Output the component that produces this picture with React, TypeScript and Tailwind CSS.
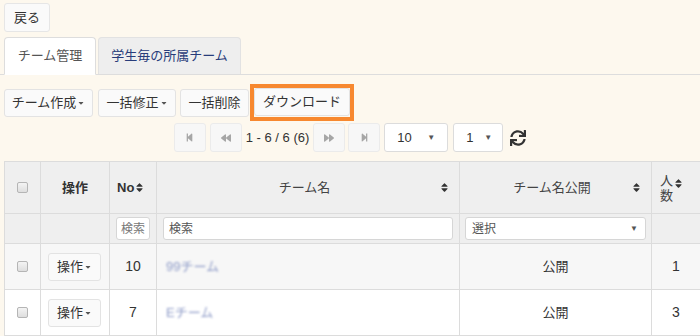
import {
  FaStepBackward,
  FaBackward,
  FaForward,
  FaStepForward,
  FaSort,
  FaSync,
  FaCaretDown,
} from "react-icons/fa";

const font = {
  fontFamily: '"Liberation Sans", "Noto Sans CJK JP", sans-serif',
};

const btn =
  "h-[28px] px-[4px] flex items-center justify-center whitespace-nowrap text-[13px] text-[#333] bg-[#fafafa] border border-[#e3e3e3] rounded-[3px]";

function Caret() {
  return <FaCaretDown className="text-[#555] w-[8px] h-[8px] ml-[1px] shrink-0" />;
}

function PageBtn({ children }: { children: React.ReactNode }) {
  return (
    <div className="w-[32px] h-[29px] flex items-center justify-center bg-[#f7f7f7] border border-[#ebebeb] rounded-[3px] text-[#a6a6a6]">
      {children}
    </div>
  );
}

function Check() {
  return (
    <div className="w-[11px] h-[11px] mx-auto border border-[#b5b5b5] rounded-[2px] bg-gradient-to-b from-[#f4f4f4] to-[#dedede]" />
  );
}

const rows = [
  { no: "10", name: "99チーム", pub: "公開", count: "1" },
  { no: "7", name: "Eチーム", pub: "公開", count: "3" },
];

export default function App() {
  return (
    <div
      className="w-[700px] h-[336px] overflow-hidden bg-[#fdf8ee] pl-[4px] text-[#333]"
      style={font}
    >
      <div className="pt-[3px]">
        <button className="h-[29px] px-[9px] text-[13px] bg-[#fafafa] border border-[#e6e6e6] rounded-[3px] text-[#333]">
          戻る
        </button>
      </div>

      {/* tabs */}
      <div className="mt-[5px] flex items-end border-b border-[#dddddd] h-[38px] -ml-[4px] pl-[4px]">
        <div className="h-[38px] w-[92px] flex items-center justify-center bg-white border border-[#dddddd] border-b-white rounded-t-[4px] text-[13px] text-[#555] -mb-px">
          チーム管理
        </div>
        <div className="ml-[2px] h-[37px] w-[143px] flex items-center justify-center bg-[#eeeeee] border border-[#e2e2e2] border-b-0 rounded-t-[4px] text-[13px] text-[#283c7a]">
          学生毎の所属チーム
        </div>
      </div>

      {/* toolbar */}
      <div className="mt-[9px] flex items-center">
        <button className={btn + " w-[89px]"}>
          チーム作成
          <Caret />
        </button>
        <button className={btn + " ml-[5px] w-[78px]"}>
          一括修正
          <Caret />
        </button>
        <button className={btn + " ml-[4px] w-[69px]"}>一括削除</button>
        <div className="ml-[1px] border-[4px] border-[#f7882f] pb-[1px]">
          <button className={btn + " w-[96px]"}>ダウンロード</button>
        </div>
      </div>

      {/* pagination */}
      <div className="mt-[2px] flex items-center justify-center pr-[4px] h-[29px]">
        <PageBtn>
          <FaStepBackward className="w-[9px] h-[9px]" />
        </PageBtn>
        <div className="ml-[4px]">
          <PageBtn>
            <FaBackward className="w-[10px] h-[10px]" />
          </PageBtn>
        </div>
        <span className="mx-[4px] text-[13px] text-[#333]">1 - 6 / 6 (6)</span>
        <PageBtn>
          <FaForward className="w-[10px] h-[10px]" />
        </PageBtn>
        <div className="ml-[3px]">
          <PageBtn>
            <FaStepForward className="w-[9px] h-[9px]" />
          </PageBtn>
        </div>
        <div className="ml-[4px] w-[64px] h-[29px] flex items-center justify-between px-[12px] bg-white border border-[#dcdcdc] rounded-[3px] text-[13px]">
          <span>10</span>
          <span className="text-[8px] text-[#555]">▼</span>
        </div>
        <div className="ml-[5px] w-[50px] h-[29px] flex items-center justify-between pl-[12px] pr-[10px] bg-white border border-[#dcdcdc] rounded-[3px] text-[13px]">
          <span>1</span>
          <span className="text-[8px] text-[#555]">▼</span>
        </div>
        <FaSync className="ml-[7px] w-[16px] h-[16px] text-[#333]" />
      </div>

      {/* table */}
      <table className="mt-[9px] border-collapse table-fixed w-[696px] text-[13px]">
        <colgroup>
          <col className="w-[36px]" />
          <col className="w-[69px]" />
          <col className="w-[47px]" />
          <col className="w-[303px]" />
          <col className="w-[192px]" />
          <col className="w-[49px]" />
        </colgroup>
        <thead>
          <tr className="h-[52px] bg-[#efefef]">
            <th className="border border-[#dcdcdc] font-normal">
              <Check />
            </th>
            <th className="border border-[#dcdcdc] font-bold text-[#333]">
              操作
            </th>
            <th className="border border-[#dcdcdc] font-bold pl-[7px] text-left">
              <span className="inline-flex items-center">
                No
                <FaSort className="w-[9px] h-[11px] ml-[1px]" />
              </span>
            </th>
            <th className="border border-[#dcdcdc] font-normal">
              <div className="flex items-center pl-[12px] pr-[10px]">
                <span className="flex-1 text-center text-[#444]">チーム名</span>
                <FaSort className="w-[9px] h-[11px]" />
              </div>
            </th>
            <th className="border border-[#dcdcdc] font-normal">
              <div className="flex items-center pl-[12px] pr-[10px]">
                <span className="flex-1 text-center text-[#444]">チーム名公開</span>
                <FaSort className="w-[9px] h-[11px]" />
              </div>
            </th>
            <th className="border border-[#dcdcdc] font-normal">
              <div className="flex items-center pl-[8px]">
                <span className="w-[13px] leading-[15px] text-[#444]">人数</span>
                <FaSort className="w-[9px] h-[11px] ml-[1px] -mt-[8px]" />
              </div>
            </th>
          </tr>
        </thead>
        <tbody>
          <tr className="h-[30px] bg-[#efefef]">
            <td className="border border-[#dcdcdc]" />
            <td className="border border-[#dcdcdc]" />
            <td className="border border-[#dcdcdc] px-[6px]">
              <div className="h-[23px] w-[34px] bg-white border border-[#d6d6d6] rounded-[3px] text-[12px] text-[#777] pl-[4px] flex items-center overflow-hidden whitespace-nowrap">
                検索
              </div>
            </td>
            <td className="border border-[#dcdcdc] px-[6px]">
              <div className="h-[23px] bg-white border border-[#d6d6d6] rounded-[3px] text-[12px] text-[#555] pl-[5px] flex items-center">
                検索
              </div>
            </td>
            <td className="border border-[#dcdcdc] px-[5px]">
              <div className="h-[23px] bg-white border border-[#d6d6d6] rounded-[3px] text-[12px] text-[#555] pl-[6px] pr-[7px] flex items-center justify-between">
                <span>選択</span>
                <span className="text-[8px] text-[#555]">▼</span>
              </div>
            </td>
            <td className="border border-[#dcdcdc]" />
          </tr>
          {rows.map((r, i) => (
            <tr
              key={r.no}
              className={"h-[46px] " + (i % 2 === 0 ? "bg-[#f7f7f7]" : "bg-white")}
            >
              <td className="border border-[#dcdcdc]">
                <Check />
              </td>
              <td className="border border-[#dcdcdc] pl-[7px]">
                <button className="h-[28px] w-[53px] flex items-center justify-center text-[13px] text-[#333] bg-[#fafafa] border border-[#e3e3e3] rounded-[3px]">
                  操作
                  <Caret />
                </button>
              </td>
              <td className="border border-[#dcdcdc] text-center text-[14px]">
                {r.no}
              </td>
              <td className="border border-[#dcdcdc] pl-[9px]">
                <span className="text-[#8f9cc8] blur-[1px]">{r.name}</span>
              </td>
              <td className="border border-[#dcdcdc] text-center">{r.pub}</td>
              <td className="border border-[#dcdcdc] text-center text-[14px]">
                {r.count}
              </td>
            </tr>
          ))}
        </tbody>
      </table>
    </div>
  );
}
